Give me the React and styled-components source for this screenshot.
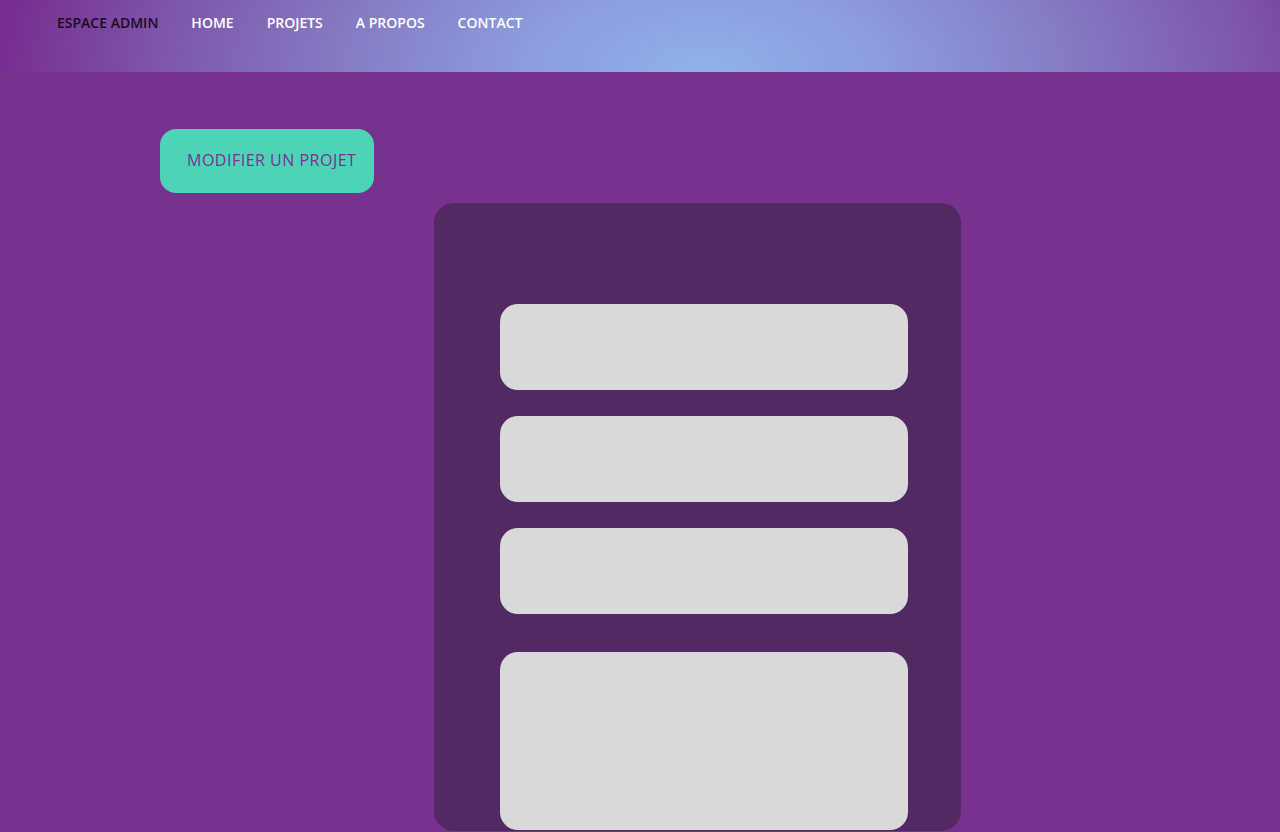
import styled, { createGlobalStyle } from 'styled-components';

const GlobalStyle = createGlobalStyle`
  * {
    box-sizing: border-box;
  }
  body {
    margin: 0;
    background-color: #77318f;
    font-family: "Open Sans", "Liberation Sans", sans-serif;
  }
`;

const links = ['HOME', 'PROJETS', 'A PROPOS', 'CONTACT'];

export default function App() {
  return (
    <>
      <GlobalStyle />
      <Header>
        <Nav>
          <NavItem $admin>ESPACE ADMIN</NavItem>
          {links.map((l) => (
            <NavItem key={l}>{l}</NavItem>
          ))}
        </Nav>
      </Header>
      <Main>
        <EditButton>MODIFIER UN PROJET</EditButton>
        <FormCard>
          <Field />
          <Field />
          <Field />
          <TextArea />
        </FormCard>
      </Main>
    </>
  );
}

const Header = styled.header`
  height: 72px;
  background: radial-gradient(
    ellipse 55% 500% at 55% 100%,
    #8fb2ea 0%,
    #8c9ddd 25%,
    #857bc3 52%,
    #7d55a9 78%,
    #772d91 100%
  );
  display: flex;
  align-items: flex-start;
  padding-left: 57px;
`;

const Nav = styled.nav`
  display: flex;
  gap: 33px;
  padding-top: 13px;
`;

const NavItem = styled.a`
  font-size: 14px;
  font-weight: 600;
  line-height: 20px;
  color: ${(p) => (p.$admin ? '#1b0b22' : '#ffffff')};
  cursor: pointer;
`;

const Main = styled.main`
  display: flex;
  flex-direction: column;
  padding-top: 57px;
`;

const EditButton = styled.button`
  align-self: flex-start;
  margin-left: 160px;
  width: 214px;
  height: 64px;
  border: none;
  border-radius: 16px;
  background-color: #4dd4b6;
  color: #7a3193;
  font-family: "Open Sans", "Liberation Sans", sans-serif;
  font-size: 16px;
  letter-spacing: 0.5px;
  text-align: left;
  padding: 0 0 3px 27px;
  cursor: pointer;
`;

const FormCard = styled.form`
  margin-top: 10px;
  margin-left: 434px;
  width: 527px;
  height: 628px;
  background-color: #522963;
  border-radius: 20px;
  padding: 101px 0 0 66px;
  display: flex;
  flex-direction: column;
  gap: 26px;
`;

const Field = styled.div`
  width: 408px;
  height: 86px;
  background-color: #d9d9d9;
  border-radius: 18px;
  flex-shrink: 0;
`;

const TextArea = styled(Field)`
  height: 178px;
  margin-top: 12px;
`;
